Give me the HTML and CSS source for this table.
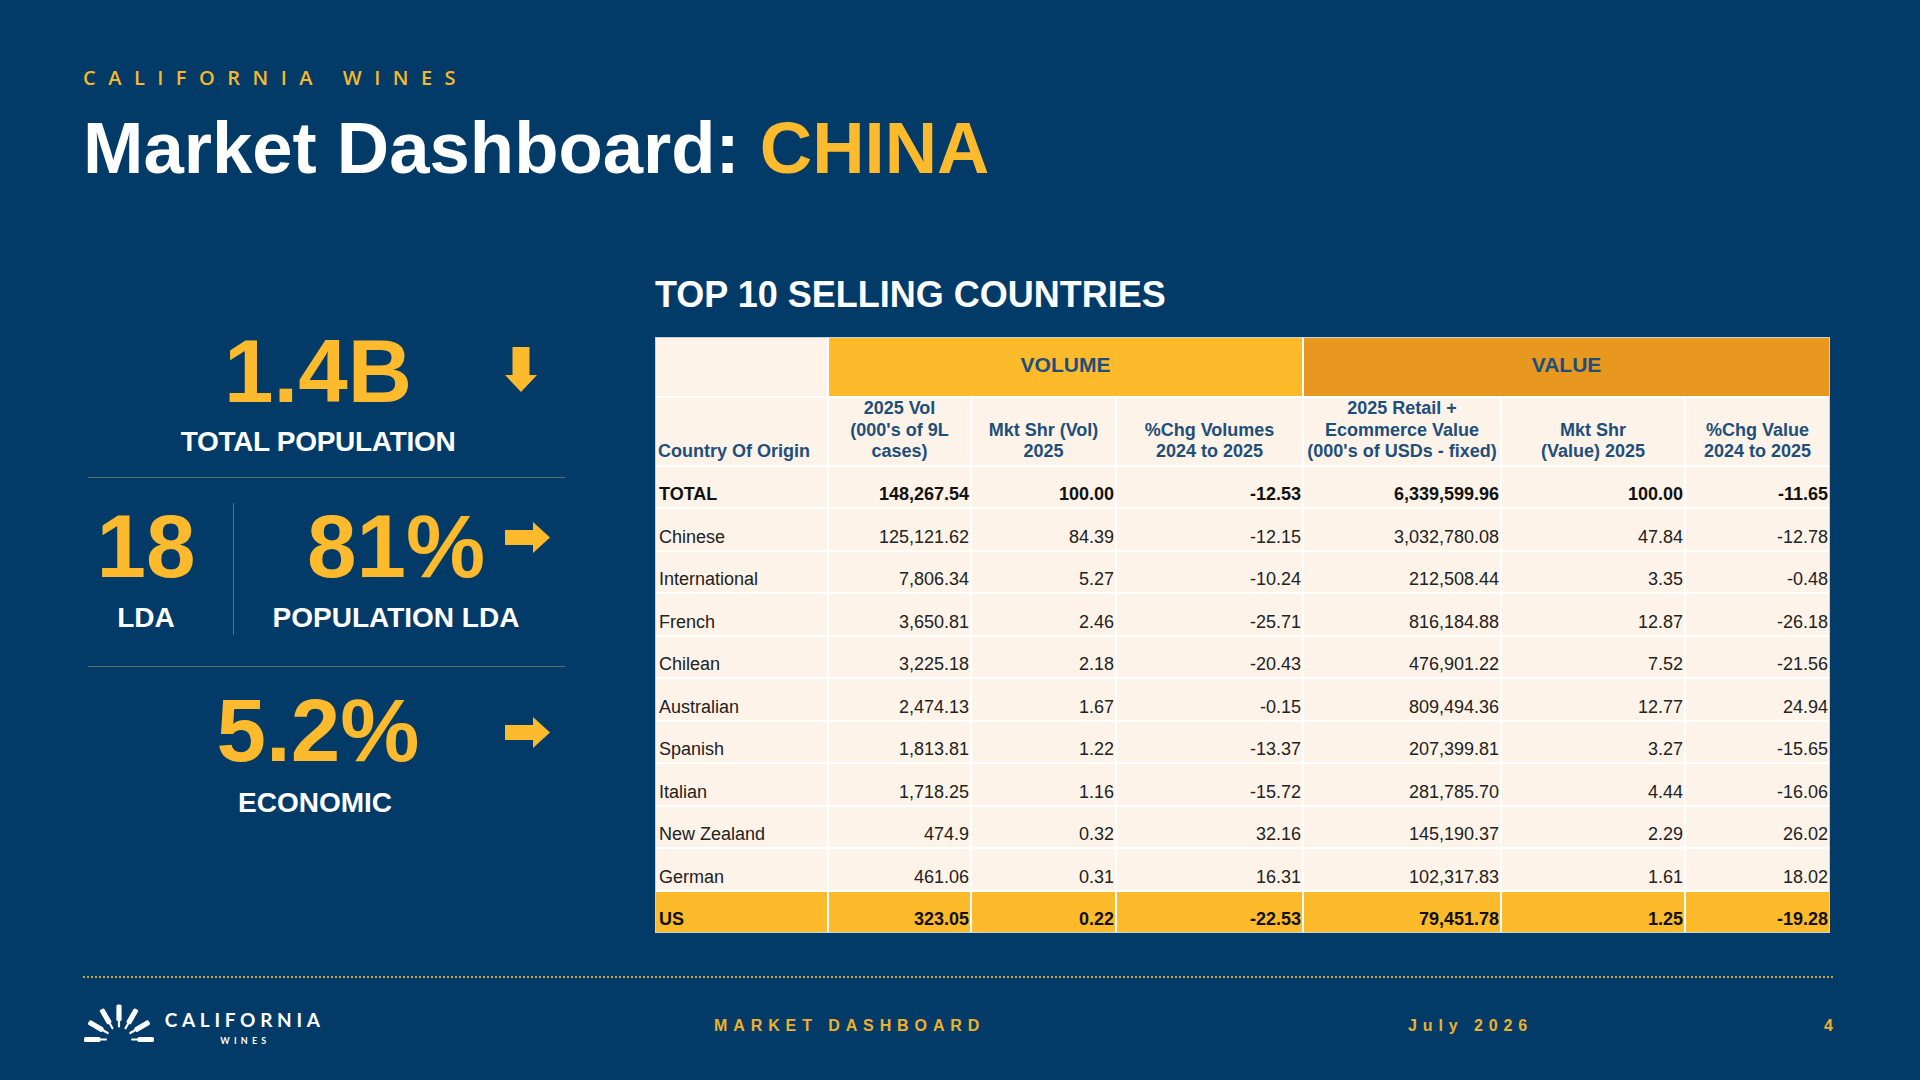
FILE: index.html
```html
<!DOCTYPE html>
<html lang="en">
<head>
<meta charset="utf-8">
<title>Market Dashboard: CHINA</title>
<link rel="stylesheet" href="styles.css">
</head>
<body>
<div class="slide">
  <header class="head">
    <div class="eyebrow">CALIFORNIA WINES</div>
    <h1 class="title">Market Dashboard: <span class="accent">CHINA</span></h1>
  </header>

  <main class="main">
    <section class="stats">
      <div class="stat stat-top">
        <div class="stat-body">
          <div class="num">1.4B</div>
          <div class="label label-top">TOTAL POPULATION</div>
        </div>
        <svg class="arrow arrow-down" width="32" height="45" viewBox="0 0 32 45"><polygon points="7.5,0 24.5,0 24.5,28 32,28 16,45 0,28 7.5,28"/></svg>
      </div>
      <div class="rule rule-1"></div>
      <div class="split">
        <div class="split-left">
          <div class="num">18</div>
          <div class="label label-mid">LDA</div>
        </div>
        <div class="vrule"></div>
        <div class="split-right">
          <div class="stat-body">
            <div class="num">81%</div>
            <div class="label label-mid">POPULATION LDA</div>
          </div>
          <svg class="arrow arrow-right arrow-mid" width="45" height="31" viewBox="0 0 45 31"><polygon points="0,8 28,8 28,0 45,15.5 28,31 28,23 0,23"/></svg>
        </div>
      </div>
      <div class="rule rule-2"></div>
      <div class="stat stat-bottom">
        <div class="stat-body">
          <div class="num">5.2%</div>
          <div class="label label-bottom">ECONOMIC</div>
        </div>
        <svg class="arrow arrow-right arrow-low" width="45" height="31" viewBox="0 0 45 31"><polygon points="0,8 28,8 28,0 45,15.5 28,31 28,23 0,23"/></svg>
      </div>
    </section>

    <section class="countries">
      <h2 class="table-title">TOP 10 SELLING COUNTRIES</h2>
      <table class="grid">
        <colgroup>
          <col class="c1"><col class="c2"><col class="c3"><col class="c4"><col class="c5"><col class="c6"><col class="c7">
        </colgroup>
        <thead>
          <tr class="r-group">
            <th class="blank"></th>
            <th class="group vol" colspan="3">VOLUME</th>
            <th class="group val last" colspan="3">VALUE</th>
          </tr>
          <tr class="r-head">
            <th class="hd left">Country Of Origin</th>
            <th class="hd">2025 Vol<br>(000's of 9L<br>cases)</th>
            <th class="hd">Mkt Shr (Vol)<br>2025</th>
            <th class="hd">%Chg Volumes<br>2024 to 2025</th>
            <th class="hd">2025 Retail +<br>Ecommerce Value<br>(000's of USDs - fixed)</th>
            <th class="hd">Mkt Shr<br>(Value) 2025</th>
            <th class="hd last">%Chg Value<br>2024 to 2025</th>
          </tr>
        </thead>
        <tbody>
          <tr class="row total"><td class="name">TOTAL</td><td>148,267.54</td><td>100.00</td><td>-12.53</td><td>6,339,599.96</td><td>100.00</td><td class="last">-11.65</td></tr>
          <tr class="row"><td class="name">Chinese</td><td>125,121.62</td><td>84.39</td><td>-12.15</td><td>3,032,780.08</td><td>47.84</td><td class="last">-12.78</td></tr>
          <tr class="row"><td class="name">International</td><td>7,806.34</td><td>5.27</td><td>-10.24</td><td>212,508.44</td><td>3.35</td><td class="last">-0.48</td></tr>
          <tr class="row"><td class="name">French</td><td>3,650.81</td><td>2.46</td><td>-25.71</td><td>816,184.88</td><td>12.87</td><td class="last">-26.18</td></tr>
          <tr class="row"><td class="name">Chilean</td><td>3,225.18</td><td>2.18</td><td>-20.43</td><td>476,901.22</td><td>7.52</td><td class="last">-21.56</td></tr>
          <tr class="row"><td class="name">Australian</td><td>2,474.13</td><td>1.67</td><td>-0.15</td><td>809,494.36</td><td>12.77</td><td class="last">24.94</td></tr>
          <tr class="row"><td class="name">Spanish</td><td>1,813.81</td><td>1.22</td><td>-13.37</td><td>207,399.81</td><td>3.27</td><td class="last">-15.65</td></tr>
          <tr class="row"><td class="name">Italian</td><td>1,718.25</td><td>1.16</td><td>-15.72</td><td>281,785.70</td><td>4.44</td><td class="last">-16.06</td></tr>
          <tr class="row"><td class="name">New Zealand</td><td>474.9</td><td>0.32</td><td>32.16</td><td>145,190.37</td><td>2.29</td><td class="last">26.02</td></tr>
          <tr class="row"><td class="name">German</td><td>461.06</td><td>0.31</td><td>16.31</td><td>102,317.83</td><td>1.61</td><td class="last">18.02</td></tr>
          <tr class="row us"><td class="name">US</td><td>323.05</td><td>0.22</td><td>-22.53</td><td>79,451.78</td><td>1.25</td><td class="last">-19.28</td></tr>
        </tbody>
      </table>
    </section>
  </main>

  <footer class="foot">
    <div class="logo">
      <svg class="logo-mark" width="72" height="40" viewBox="0 0 72 40">
        <defs>
          <g id="bottle">
            <rect x="48" y="35.4" width="8" height="2.2" rx="1"/>
            <rect x="54.5" y="33.9" width="16.5" height="5.2" rx="1.6"/>
          </g>
        </defs>
        <use href="#bottle"/>
        <use href="#bottle" transform="rotate(-30 36 36.5)"/>
        <use href="#bottle" transform="rotate(-60 36 36.5)"/>
        <use href="#bottle" transform="rotate(-90 36 36.5)"/>
        <use href="#bottle" transform="rotate(-120 36 36.5)"/>
        <use href="#bottle" transform="rotate(-150 36 36.5)"/>
        <use href="#bottle" transform="rotate(180 36 36.5)"/>
      </svg>
      <div class="logo-text">
        <span class="logo-name">CALIFORNIA</span>
        <span class="logo-sub">WINES</span>
      </div>
    </div>
    <div class="foot-text">MARKET DASHBOARD</div>
    <div class="foot-text">July 2026</div>
    <div class="foot-text page">4</div>
  </footer>
</div>
</body>
</html>
```

FILE: styles.css
```css
* { box-sizing: border-box; }

html, body {
  margin: 0;
  padding: 0;
}

body {
  width: 1920px;
  height: 1080px;
  overflow: hidden;
  background: #023b68;
  font-family: "Liberation Sans", Arial, sans-serif;
}

.slide {
  width: 1920px;
  height: 1080px;
  padding: 0 87px 0 83px;
  display: flex;
  flex-direction: column;
}

/* ---------- header ---------- */
.head {
  padding-top: 68px;
}

.eyebrow {
  font-family: "Open Sans", "Liberation Sans", sans-serif;
  font-weight: 600;
  font-size: 20px;
  line-height: 20px;
  letter-spacing: 12.5px;
  color: #f7b82b;
}

.title {
  margin: 24px 0 0 0;
  font-size: 72.5px;
  line-height: 72px;
  font-weight: 700;
  color: #ffffff;
}

.accent {
  color: #fdba2c;
}

/* ---------- main ---------- */
.main {
  display: flex;
  margin-top: 93px;
}

.stats {
  width: 477px;
  margin-left: 5px;
  padding-top: 49px;
  display: flex;
  flex-direction: column;
  color: #fdba2c;
}

.num {
  font-size: 89px;
  line-height: 90px;
  font-weight: 700;
  color: #fdba2c;
  white-space: nowrap;
}

.label {
  font-size: 28px;
  line-height: 28px;
  font-weight: 700;
  color: #ffffff;
  white-space: nowrap;
}

.label-top { margin-top: 12px; letter-spacing: -0.3px; }
.label-mid { margin-top: 13px; }
.label-bottom { margin-top: 14px; margin-right: 6px; }

.stat,
.split-right {
  display: grid;
}

.stat > *,
.split-right > * {
  grid-area: 1 / 1;
}

.stat-body {
  display: flex;
  flex-direction: column;
  align-items: center;
  justify-self: center;
}

.stat .stat-body {
  margin-right: 17px;
}

.arrow {
  fill: #fdba2c;
  justify-self: end;
  align-self: start;
}

.arrow-down { margin: 21px 28px 0 0; }
.arrow-mid { margin: 21px 8px 0 0; }
.arrow-low { margin: 32px 15px 0 0; }

.rule {
  height: 1px;
  background: #5b6f6c;
}

.rule-1 { margin-top: 21px; }
.rule-2 { margin-top: 31px; }

.split {
  display: flex;
  align-items: flex-start;
  margin-top: 23px;
}

.split-left {
  width: 116px;
  display: flex;
  flex-direction: column;
  align-items: center;
}

.vrule {
  width: 1px;
  height: 132px;
  margin: 2px 0 0 29px;
  background: #5b6f6c;
}

.split-right {
  flex: 1;
  padding-right: 7px;
}

.split-right .stat-body {
  justify-self: center;
}

.stat-bottom {
  margin-top: 18px;
}

/* ---------- table ---------- */
.countries {
  margin-left: 90px;
  width: 1175px;
}

.table-title {
  margin: 0;
  font-size: 36px;
  line-height: 36px;
  font-weight: 700;
  color: #ffffff;
}

.grid {
  margin-top: 24px;
  width: 1175px;
  table-layout: fixed;
  border-collapse: separate;
  border-spacing: 0;
  border: 1px solid #c9d2dc;
  background: #ffffff;
  font-size: 18px;
}

.c1 { width: 173px; }
.c2 { width: 143px; }
.c3 { width: 145px; }
.c4 { width: 187px; }
.c5 { width: 198px; }
.c6 { width: 184px; }
.c7 { width: 143px; }

.grid th,
.grid td {
  padding: 0;
  border-right: 2px solid #ffffff;
  border-bottom: 2px solid #ffffff;
  background: #fdf3e8;
}

.grid .last { border-right: 0; }
.grid tr.us td { border-bottom: 0; }

.r-group { height: 60px; }
.r-head { height: 67px; }
.row { height: 42.5px; }
.row.us { height: 40.5px; }

.group {
  font-size: 21px;
  line-height: 24px;
  font-weight: 700;
  color: #1d4f7b;
  text-align: center;
  vertical-align: middle;
  padding-bottom: 4px !important;
}

.group.vol { background: #fdbb2b; }
.group.val { background: #e8971f; }

.hd {
  font-size: 18px;
  line-height: 21.5px;
  font-weight: 700;
  color: #1d4f7b;
  text-align: center;
  vertical-align: bottom;
  padding: 0 0 2px 0 !important;
  white-space: nowrap;
}

.hd.left {
  text-align: left;
  padding-left: 2px !important;
}

.row td {
  font-size: 18px;
  line-height: 20px;
  color: #222222;
  text-align: right;
  vertical-align: bottom;
  padding: 0 1px 3px 0;
  white-space: nowrap;
}

.row td.name {
  text-align: left;
  padding-left: 3px;
}

.row.total td,
.row.us td {
  font-weight: 700;
  color: #111111;
}

.row.us td {
  background: #fdbb2b;
}

/* ---------- footer ---------- */
.foot {
  margin-top: 43px;
  border-top: 2px dotted #c9a43a;
  padding-top: 25px;
  display: grid;
  grid-template-columns: 631px 694px 1fr auto;
  align-items: start;
}

.logo {
  display: flex;
  align-items: flex-start;
}

.logo-mark {
  fill: #ffffff;
  display: block;
}

.logo-text {
  margin-left: 5px;
  display: flex;
  flex-direction: column;
  align-items: center;
  color: #ffffff;
  font-family: Lato, "Liberation Sans", sans-serif;
  font-weight: 700;
}

.logo-name {
  margin-top: 7px;
  font-size: 19px;
  line-height: 19px;
  letter-spacing: 4.7px;
  padding-left: 4.7px;
}

.logo-sub {
  margin-top: 6.5px;
  font-size: 9px;
  line-height: 9px;
  letter-spacing: 4.2px;
  margin-left: 6px;
}

.foot-text {
  margin-top: 15px;
  font-size: 16px;
  line-height: 16px;
  font-weight: 700;
  letter-spacing: 5.9px;
  color: #edb12c;
  white-space: nowrap;
}

.foot-text.page {
  letter-spacing: 0;
}
```
